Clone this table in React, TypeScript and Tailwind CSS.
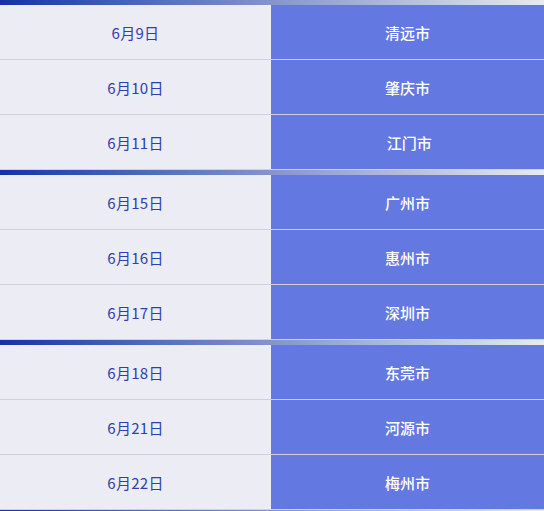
import React from "react";

const groups: [string, string][][] = [
  [
    ["6月9日", "清远市"],
    ["6月10日", "肇庆市"],
    ["6月11日", " 江门市"],
  ],
  [
    ["6月15日", "广州市"],
    ["6月16日", "惠州市"],
    ["6月17日", "深圳市"],
  ],
  [
    ["6月18日", "东莞市"],
    ["6月21日", "河源市"],
    ["6月22日", "梅州市"],
  ],
];

export default function App() {
  return (
    <div
      className="w-[544px] h-[511px] overflow-hidden bg-[#ececf5]"
      style={{ fontFamily: '"Noto Sans CJK SC", "Noto Sans", sans-serif' }}
    >
      {groups.map((g, gi) => (
        <div key={gi}>
          <div className="h-[5px] bg-gradient-to-r from-[#1a2ea8] via-[#8595cc] to-[#e8ebeb]" />
          {g.map(([d, c], i) => (
            <div key={i} className="flex h-[55px] border-b border-[#d2d2d6]">
              <div className="w-[271px] flex items-center justify-center pt-[3px] text-[15px] tracking-[0.3px] text-[#2e40b0] bg-[#ececf5]">
                {d}
              </div>
              <div className="flex-1 flex items-center justify-center pt-[3px] text-[15px] font-medium text-white bg-[#6478e1] whitespace-pre">
                {c}
              </div>
            </div>
          ))}
        </div>
      ))}
      <div className="h-[5px] bg-gradient-to-r from-[#1a2ea8] via-[#8595cc] to-[#e8ebeb]" />
    </div>
  );
}
